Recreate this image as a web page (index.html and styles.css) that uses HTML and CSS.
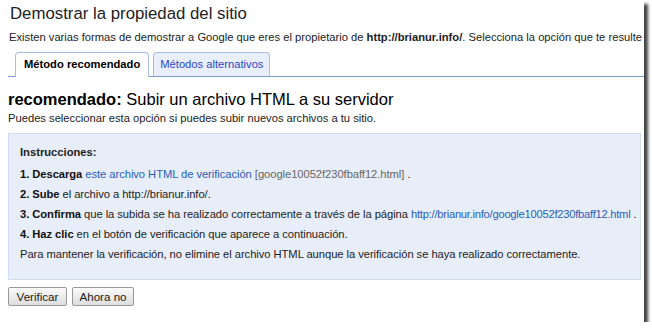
FILE: index.html
```html
<!DOCTYPE html>
<html lang="es">
<head>
  <meta charset="UTF-8">
  <title>Demostrar la propiedad del sitio</title>
  <link rel="stylesheet" href="styles.css">
</head>
<body>
<div class="frame">
  <h1 class="title">Demostrar la propiedad del sitio</h1>
  <p class="intro">Existen varias formas de demostrar a Google que eres el propietario de <b>http://brianur.info/</b>. Selecciona la opción que te resulte más cómoda.</p>

  <div class="tabs">
    <div class="tab active">Método recomendado</div>
    <div class="tab">Métodos alternativos</div>
  </div>

  <h2 class="method"><b>recomendado:</b> Subir un archivo HTML a su servidor</h2>
  <p class="sub">Puedes seleccionar esta opción si puedes subir nuevos archivos a tu sitio.</p>

  <div class="box">
    <div class="box-title">Instrucciones:</div>
    <div class="step"><b>1. Descarga</b> <a href="#">este archivo HTML de verificación</a> <span class="file">[google10052f230fbaff12.html]</span> .</div>
    <div class="step"><b>2. Sube</b> el archivo a http://brianur.info/.</div>
    <div class="step"><b>3. Confirma</b> que la subida se ha realizado correctamente a través de la página <a class="url" href="#">http://brianur.info/google10052f230fbaff12.html</a> .</div>
    <div class="step"><b>4. Haz clic</b> en el botón de verificación que aparece a continuación.</div>
    <div class="step">Para mantener la verificación, no elimine el archivo HTML aunque la verificación se haya realizado correctamente.</div>
  </div>

  <div class="actions">
    <button class="btn btn-verify" type="button">Verificar</button>
    <button class="btn btn-later" type="button">Ahora no</button>
  </div>
</div>
</body>
</html>
```

FILE: styles.css
```css
body { margin: 0; background: #fff; font-family: 'Liberation Sans', Arial, sans-serif; font-size: 11.2px; color: #222; }
.frame { width: 644px; height: 322px; background: #fff; overflow: hidden; box-shadow: 4px 4px 3px #444; }
.title { margin: 0; padding: 3px 0 0 10px; font-size: 16.8px; font-weight: normal; line-height: 22px; color: #222; }
.intro { margin: 5px 0 0 9px; line-height: 15px; white-space: nowrap; }
.tabs { display: flex; gap: 4px; margin: 7px 0 0 8px; padding-left: 7px; border-bottom: 1px solid #7a9ad8; }
.tab { height: 23px; line-height: 23px; padding: 0 6px; border: 1px solid #a8bde6; border-bottom: none; border-radius: 4px 4px 0 0; background: #e8eefa; color: #2a48c8; }
.tab.active { padding: 0 8px; background: #fff; color: #000; font-weight: bold; margin-bottom: -1px; height: 24px; }
.method { margin: 11px 0 0 8px; font-size: 16.5px; font-weight: normal; line-height: 22px; color: #000; }
.sub { margin: 1px 0 0 8px; line-height: 15px; }
.box { margin: 7px 0 0 8px; width: 610px; padding: 8px 10px 15px 11px; background: #e8eef9; border: 1px solid #d0dcf0; }
.box-title { font-weight: bold; line-height: 20px; margin-bottom: 2px; }
.step { line-height: 20px; white-space: nowrap; letter-spacing: -0.05px; }
.step b { color: #111; }
.box a { color: #2a5db8; text-decoration: none; }
.box .url { letter-spacing: -0.25px; }
.file { color: #666; }
.actions { display: flex; gap: 5px; margin: 7px 0 0 8px; }
.btn { height: 19px; padding: 0; white-space: nowrap; font-family: inherit; font-size: 11.6px; color: #222; border: 1px solid #999; border-radius: 2px; background: linear-gradient(#fafafa, #ddd); }
.btn-verify { width: 59px; }
.btn-later { width: 62px; }
```
